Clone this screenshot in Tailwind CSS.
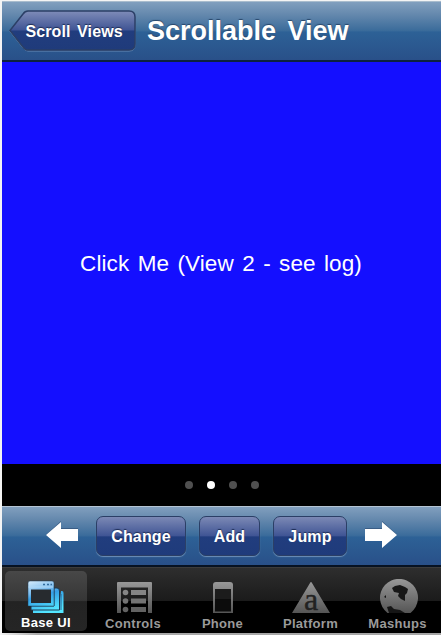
<!DOCTYPE html>
<html lang="en">
<head>
<meta charset="utf-8">
<title>Scrollable View</title>
<script src="https://cdn.jsdelivr.net/npm/@tailwindcss/browser@4"></script>
</head>
<body class="w-[441px] h-[635px] overflow-hidden bg-[#f4f4f4] pl-[2px] pt-px font-['Liberation_Sans',Arial,sans-serif] text-white">
<div class="flex flex-col w-[439px] h-[634px]">
  <header class="flex items-center h-[61px] shrink-0 border-t border-t-[#a9bccd] border-b-2 border-b-[#0c2140] bg-[linear-gradient(#819fbe_0%,#6488ad_22%,#3b6c9b_49%,#2d6196_52%,#295089_100%)]">
    <div class="relative flex items-center w-[128px] h-[42px] ml-[7px]">
      <svg class="absolute inset-0" width="128" height="42" viewBox="0 0 128 42" fill="none">
        <defs><linearGradient id="b" x1="0" y1="0" x2="0" y2="1"><stop offset="0" stop-color="#7f8cb8"/><stop offset=".49" stop-color="#3f5494"/><stop offset=".51" stop-color="#213d7e"/><stop offset="1" stop-color="#1f3b7b"/></linearGradient></defs>
        <path d="M19 2H120Q126 2 126 8V35Q126 41 120 41H19Q16 41 14 38L1 21.500L14 5Q16 2 19 2Z" stroke="#6789b4" stroke-width="1"/>
        <path d="M19 1H120Q126 1 126 7V34Q126 40 120 40H19Q16 40 14 37L1 20.500L14 4Q16 1 19 1Z" fill="url(#b)" stroke="#2b3f66" stroke-width="1.500"/>
      </svg>
      <span class="relative pl-[16.500px] pt-px text-[16px] leading-[20px] font-bold whitespace-nowrap [word-spacing:2px] tracking-[0.1px] [text-shadow:0_-1px_1px_#1c2c54]">Scroll Views</span>
    </div>
    <h1 class="ml-[10px] pb-px text-[27px] leading-[32px] font-bold whitespace-nowrap [word-spacing:4px] [text-shadow:0_-1px_1px_#28466a]">Scrollable View</h1>
  </header>
  <main class="flex items-center justify-center h-[402px] shrink-0 bg-[#140fff]">
    <p class="pt-[2px] pr-px text-[22.500px] leading-[28px] whitespace-nowrap tracking-[0.1px] [word-spacing:2px]">Click Me (View 2 - see log)</p>
  </main>
  <div class="flex items-center justify-center gap-[14px] h-[42px] shrink-0 bg-black pl-px">
    <i class="size-[8px] rounded-full bg-[#505050]"></i>
    <i class="size-[8px] rounded-full bg-white"></i>
    <i class="size-[8px] rounded-full bg-[#505050]"></i>
    <i class="size-[8px] rounded-full bg-[#505050]"></i>
  </div>
  <div class="flex items-start h-[61px] shrink-0 border-t border-t-[#b5c5d4] border-b-2 border-b-[#071222] bg-[linear-gradient(#819fbe_0%,#6488ad_22%,#3b6c9b_49%,#2d6196_52%,#295089_100%)] pl-[44px] pt-[9px] text-[16px] font-bold tracking-[0.15px] [text-shadow:0_-1px_1px_#1c2c54]">
    <svg class="mt-[5px]" width="32" height="28" viewBox="0 0 32 28"><path d="M0 13.500L15 0V7H32V19H15V26Z" fill="#3a5d85"/><path d="M0 14L15 1V8H32V20H15V27Z" fill="#fff"/></svg>
    <div class="flex items-center justify-center w-[90px] h-[40px] ml-[18px] pt-[2px] rounded-[7px] border-[1.500px] border-[#2b3f66] bg-[linear-gradient(#7c89b5_0%,#3f5494_50%,#213d7e_52%,#1f3b7b_100%)] shadow-[0_1px_1px_#6d8fb8]">Change</div>
    <div class="flex items-center justify-center w-[61px] h-[40px] ml-[13px] pt-[2px] rounded-[7px] border-[1.500px] border-[#2b3f66] bg-[linear-gradient(#7c89b5_0%,#3f5494_50%,#213d7e_52%,#1f3b7b_100%)] shadow-[0_1px_1px_#6d8fb8]">Add</div>
    <div class="flex items-center justify-center w-[74px] h-[40px] ml-[13px] pt-[2px] rounded-[7px] border-[1.500px] border-[#2b3f66] bg-[linear-gradient(#7c89b5_0%,#3f5494_50%,#213d7e_52%,#1f3b7b_100%)] shadow-[0_1px_1px_#6d8fb8]">Jump</div>
    <svg class="mt-[5px] ml-[18px]" width="32" height="28" viewBox="0 0 32 28"><path d="M32 13.500L17 0V7H0V19H17V26Z" fill="#3a5d85"/><path d="M32 14L17 1V8H0V20H17V27Z" fill="#fff"/></svg>
  </div>
  <nav class="flex h-[66px] shrink-0 border-t border-t-[#3c3c3c] bg-[linear-gradient(#2e2e2e_0%,#1b1b1b_50%,#000_51%,#000_100%)] pl-[3px] pt-[3px] text-[13px] leading-[16px] font-bold text-[#9a9a9a] tracking-[0.3px]">
    <div class="flex flex-col items-center w-[82px] h-[60px] mr-[2px] pt-[8px] rounded-[5px] bg-[linear-gradient(#484848_0%,#363636_49%,#232323_51%,#252525_100%)] text-white">
      <svg width="38" height="35" viewBox="0 0 38 35" fill="none">
        <defs><linearGradient id="u" gradientUnits="userSpaceOnUse" x1="10" y1="0" x2="20" y2="33"><stop offset="0" stop-color="#d3eafb"/><stop offset=".35" stop-color="#7cbdef"/><stop offset=".5" stop-color="#359fe6"/><stop offset="1" stop-color="#53e6ff"/></linearGradient></defs>
        <path d="M34 12H35Q36.500 12 36.500 14V34H6V30H31.500Z" fill="url(#u)"/>
        <path d="M34 15V31" stroke="#2b5f8c" stroke-width="1"/>
        <path d="M27 9H30Q32.500 9 32.500 12V31H4V27H27Z" fill="url(#u)" stroke="#1c3950" stroke-width="1"/>
        <path d="M1 4Q1 2 3 2H25Q27 2 27 4V27H1Z" fill="url(#u)" stroke="#1c3950" stroke-width=".5"/>
        <path d="M4 10.500H24V24H4Z" fill="#272b2f"/>
        <path d="M1.500 8H26" stroke="#b3daf7"/><path d="M16 5.500H18M20 5.500H22M23.500 5.500H25" stroke="#326c9d" stroke-width="1.500"/>
      </svg>
      <span class="mt-px">Base UI</span>
    </div>
    <div class="flex flex-col items-center w-[90px] pt-[8px]">
      <svg width="36" height="34" viewBox="0 0 36 34">
        <defs><linearGradient id="g" x1="0" y1="0" x2="0" y2="1"><stop offset="0" stop-color="#989898"/><stop offset="1" stop-color="#555"/></linearGradient></defs>
        <path fill-rule="evenodd" d="M1 4Q1 3 2 3H35Q36 3 36 4V34H1ZM5 8.500V34H32V8.500Z" fill="url(#g)"/>
        <circle cx="9.500" cy="13.500" r="2.800" fill="#858585"/><circle cx="9.500" cy="22" r="2.800" fill="#747474"/><circle cx="9.500" cy="30.500" r="2.800" fill="#626262"/>
        <path d="M15 11H30V16H15Z" fill="#858585"/><path d="M15 19.500H30V24.500H15Z" fill="#747474"/><path d="M15 28H30V33H15Z" fill="#626262"/>
      </svg>
      <span class="mt-[3px] mr-[2px]">Controls</span>
    </div>
    <div class="flex flex-col items-center w-[88px] pt-[8px]">
      <svg width="20" height="34" viewBox="0 0 20 34"><path d="M0 6Q0 3 3 3H17Q20 3 20 6V34H0Z" fill="url(#g)"/><path d="M2 10H18V32.500H2Z" fill="#0c0c0c"/><path d="M2 10H18V20H2Z" fill="#1c1c1c"/></svg>
      <span class="mt-[3px] mr-px">Phone</span>
    </div>
    <div class="flex flex-col items-center w-[88px] pt-[8px]">
      <svg class="overflow-visible" width="38" height="34" viewBox="0 0 38 34"><path d="M18 4Q19 2 20 4L38 34H0Z" fill="url(#g)"/><text x="19" y="30.500" text-anchor="middle" font-family="Liberation Serif, serif" font-size="32" style="font-weight:400;letter-spacing:0" fill="#222" stroke="#222" stroke-width=".4">a</text></svg>
      <span class="mt-[3px] mr-px">Platform</span>
    </div>
    <div class="flex flex-col items-center w-[86px] pt-[8px]">
      <svg class="ml-[2px]" width="38" height="34" viewBox="0 0 38 34"><path d="M7.500 34A19 19 0 1 1 30.500 34Z" fill="url(#g)"/><path d="M12 9L15 7L20 6L25 8L28 10L27 14L25 16V22L21 20L18 17L19 14L14 13Z" fill="#171717"/><path d="M4 18L6 16V19ZM7 28L11 27L14 30L20 31L25 34H9Z" fill="#151515"/></svg>
      <span class="mt-[3px] mr-px">Mashups</span>
    </div>
  </nav>
  <div class="h-[2px] shrink-0 bg-[linear-gradient(90deg,#eee_0%,#aaa_8%,#a5a5a5_100%)]"></div>
</div>
</body>
</html>
